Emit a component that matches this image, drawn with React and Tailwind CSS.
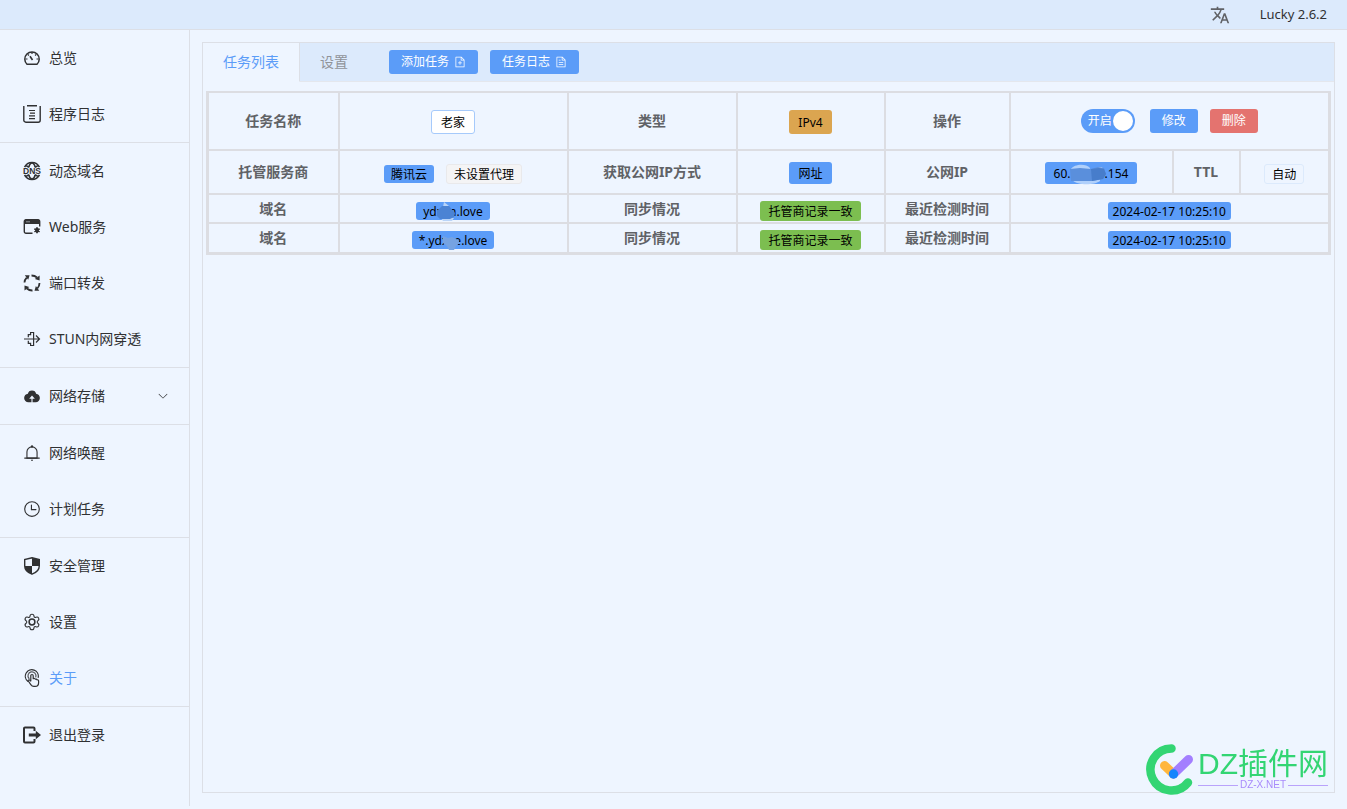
import { useState } from "react";
import { MdTranslate } from "react-icons/md";
import clsx from "clsx";

function IconGauge() {
    return (
        <svg viewBox="0 0 18 18" className="size-[18px]" fill="none" stroke="currentColor" strokeWidth="1.5" strokeLinejoin="round">
            <path d="M4 15.300a7.200 7.200 0 1 1 10 0z" />
            <path d="M9 3v2M4.700 5.300l1.200 1.200M13.300 5.300l-1.200 1.200M2.500 10h2M15.500 10h-2" strokeWidth="1.200" />
            <path d="M7 7.200 9.500 11" strokeWidth="1.600" />
        </svg>
    );
}

function IconLog() {
    return (
        <svg viewBox="0 0 18 18" className="size-[18px]" fill="none" stroke="currentColor" strokeWidth="1.4">
            <path d="M.8 1v14.2a2 2 0 0 0 2 2h12.4a2 2 0 0 0 2-2V1M4 .8h10" />
            <path d="M6 5.5h6M7 8.2h5M6 10.9h6M6 13.6h6" strokeWidth="1.2" />
        </svg>
    );
}

function IconDns() {
    return (
        <svg viewBox="0 0 18 18" className="size-[18px] overflow-visible" fill="none" stroke="currentColor" strokeWidth="1.6">
            <path d="M1.600 5.200a8.200 8.200 0 0 1 14.800 0M1.600 12.800a8.200 8.200 0 0 0 14.800 0" />
            <path d="M5.800 5.200C6.300 3 7.300 1 9 1s2.700 2 3.200 4.200M5.800 12.800C6.300 15 7.300 17 9 17s2.700-2 3.200-4.200" />
            <path d="M3 3.600 6 5.200M15 3.600 12 5.200M3 14.400 6 12.800M15 14.400 12 12.800" />
            <text x="9" y="12" textAnchor="middle" fontSize="8.5" fontWeight="700" fill="currentColor" stroke="none" fontFamily="Liberation Sans">DNS</text>
        </svg>
    );
}

function IconWeb() {
    return (
        <svg viewBox="0 0 18 18" className="size-[18px]" fill="none" stroke="currentColor">
            <path d="M9.500 15.300H3a1.700 1.700 0 0 1-1.700-1.700V3.500A1.700 1.700 0 0 1 3 1.800h12a1.700 1.700 0 0 1 1.700 1.700v5" strokeWidth="1.400" />
            <path d="M1 3.500a2 2 0 0 1 2-2h12a2 2 0 0 1 2 2V6H1z" fill="currentColor" stroke="none" />
            <path d="M3.500 3.800h1M5.500 3.800h1" stroke="#eef5ff" />
            <path d="M14 9.300v6M11.400 10.800l5.200 3M16.600 10.800l-5.200 3" strokeWidth="1.800" />
            <circle cx="14" cy="12.300" r="1.900" fill="currentColor" stroke="none" />
        </svg>
    );
}

function IconForward() {
    return (
        <svg viewBox="0 0 18 18" className="size-[18px]" fill="none" stroke="currentColor" strokeWidth="1.800">
            <path d="M1.500 8.500C1.600 6.500 2.300 5 3.700 3.600M8.500 1.500c2.200 0 4 .6 5.500 2M16.500 9c0 2.200-.8 4-2.200 5.500M9.500 16.500c-2.300.1-4-.6-5.600-2" />
            <path d="M1.800 1.300h4.800L5.200 5.800zM16.600 1.500v5l-4.800-1.400zM16.300 16.700h-4.800l1.400-4.600zM1.500 16.500v-5l4.800 1.400z" fill="currentColor" stroke="none" />
        </svg>
    );
}

function IconStun() {
    return (
        <svg viewBox="0 0 18 18" className="size-[18px]" fill="none" stroke="currentColor" strokeWidth="1.200">
            <path d="M1 9h15.500M13 5.500 16.500 9 13 12.500" />
            <path d="M5.300 7.300V4.700h2.300V2.500h3v13h-3v-2.200H5.300v-2.600" />
        </svg>
    );
}

function IconCloud() {
    return (
        <svg viewBox="0 0 1024 1024" className="size-[18px]" fill="currentColor">
            <path d="M544 864V672h128L512 480 352 672h128v192H320v-1.600c-5.376.320-10.496 1.600-16 1.600A240 240 0 0 1 64 624c0-123.136 93.120-223.488 212.608-237.248A239.808 239.808 0 0 1 512 192a239.872 239.872 0 0 1 235.456 194.752c119.488 13.760 212.480 114.112 212.480 237.248a240 240 0 0 1-240 240c-5.376 0-10.560-1.280-16-1.600v1.600z" />
        </svg>
    );
}

function IconBell() {
    return (
        <svg viewBox="0 0 1024 1024" className="size-[18px]" fill="currentColor">
            <path d="M512 64a64 64 0 0 1 64 64v64H448v-64a64 64 0 0 1 64-64" />
            <path d="M256 768h512V448a256 256 0 1 0-512 0zm256-640a320 320 0 0 1 320 320v384H192V448a320 320 0 0 1 320-320" />
            <path d="M96 768h832q32 0 32 32t-32 32H96q-32 0-32-32t32-32m352 128h128a64 64 0 0 1-128 0" />
        </svg>
    );
}

function IconClock() {
    return (
        <svg viewBox="0 0 1024 1024" className="size-[18px]" fill="currentColor">
            <path d="M512 896a384 384 0 1 0 0-768 384 384 0 0 0 0 768m0 64a448 448 0 1 1 0-896 448 448 0 0 1 0 896" />
            <path d="M480 256a32 32 0 0 1 32 32v256a32 32 0 0 1-64 0V288a32 32 0 0 1 32-32" />
            <path d="M480 512h256q32 0 32 32t-32 32H480q-32 0-32-32t32-32" />
        </svg>
    );
}

function IconShield() {
    return (
        <svg viewBox="0 0 18 18" className="size-[18px]">
            <path d="M9 .8 16.300 2.500v6.300c0 3.900-3 6.900-7.300 8.400-4.300-1.500-7.300-4.500-7.300-8.400V2.500z" fill="none" stroke="currentColor" strokeWidth="1.400" />
            <path d="M9 1l7.300 1.500V9H9zM9 9v8.200C4.700 15.700 1.700 12.700 1.700 9z" fill="currentColor" />
        </svg>
    );
}

function IconSetting() {
    return (
        <svg viewBox="0 0 18 18" className="size-[18px]" fill="none" stroke="currentColor" strokeLinejoin="round">
            <path d="M7 3.300C7 2 7.800 1.300 9 1.300s2 .7 2 2c0 1 1 1.500 1.900 1 1.100-.6 2.100-.3 2.700.7s.4 2-.7 2.700c-.9.500-.9 2.100 0 2.600 1.100.7 1.300 1.700.7 2.700s-1.600 1.300-2.700.7c-.9-.5-1.900 0-1.900 1 0 1.300-.8 2-2 2s-2-.7-2-2c0-1-1-1.500-1.900-1-1.100.6-2.100.3-2.700-.7s-.4-2 .7-2.700c.9-.5.9-2.100 0-2.600C2 7 1.800 6 2.400 5s1.600-1.300 2.700-.7c.9.5 1.900 0 1.900-1z" strokeWidth="1.100" />
            <circle cx="9" cy="9" r="2.900" strokeWidth="1.500" />
        </svg>
    );
}

function IconTouch() {
    return (
        <svg viewBox="0 0 18 18" className="size-[18px]" fill="none" stroke="currentColor" strokeWidth="1.200" strokeLinecap="round" strokeLinejoin="round">
            <path d="M4.800 12.300A6.500 6.500 0 1 1 15.200 8.500" />
            <path d="M6 9.500a4 4 0 1 1 6.800-1.500" strokeOpacity=".8" />
            <path d="M7.800 12V6.700a1.200 1.200 0 0 1 2.400 0v3c.9-.5 1.800-.2 2 .5.900-.4 1.600 0 1.800.6 1-.2 1.600.3 1.600 1.200v1.700c0 2.200-1.300 3.700-3.500 3.700h-1.300c-1.400 0-2.200-.6-3-1.800l-2.500-3.600c-.3-.8.800-1.500 1.500-.8z" fill="#eef5ff" />
        </svg>
    );
}

function IconExit() {
    return (
        <svg viewBox="0 0 18 18" className="size-[18px]">
            <path d="M11.500 5V2.500a1 1 0 0 0-1-1H2a1 1 0 0 0-1 1v13a1 1 0 0 0 1 1h8.500a1 1 0 0 0 1-1V13" fill="none" stroke="currentColor" strokeWidth="2" />
            <path d="M5.800 7.500h7V4.800L18 9l-5.200 4.200v-2.700h-7z" fill="currentColor" />
        </svg>
    );
}

function IconArrowDown() {
    return (
        <svg viewBox="0 0 1024 1024" className="size-3" fill="currentColor">
            <path d="M831.872 340.864 512 652.672 192.128 340.864a30.592 30.592 0 0 0-42.752 0 29.120 29.120 0 0 0 0 41.600L489.664 714.240a32 32 0 0 0 44.672 0l340.288-331.712a29.120 29.120 0 0 0 0-41.728 30.592 30.592 0 0 0-42.752 0z" />
        </svg>
    );
}

function IconDocument({ add }) {
    return (
        <svg viewBox="0 0 1024 1024" className="size-3" fill="currentColor">
            <path d="M832 384H576V128H192v768h640zm-26.496-64L640 154.496V320zM160 64h480l256 256v608a32 32 0 0 1-32 32H160a32 32 0 0 1-32-32V96a32 32 0 0 1 32-32" />
            {add ? (
                <path d="M480 544V416h64v128h128v64H544v128h-64V608H352v-64z" />
            ) : (
                <path d="M320 512h384v64H320zm0-192h160v64H320zm0 384h384v64H320z" />
            )}
        </svg>
    );
}

const menuGroups = [
    [
        { name: "总览", icon: <IconGauge /> },
        { name: "程序日志", icon: <IconLog /> },
    ],
    [
        { name: "动态域名", icon: <IconDns /> },
        { name: "Web服务", icon: <IconWeb /> },
        { name: "端口转发", icon: <IconForward /> },
        { name: "STUN内网穿透", icon: <IconStun /> },
    ],
    [{ name: "网络存储", icon: <IconCloud />, children: true }],
    [
        { name: "网络唤醒", icon: <IconBell /> },
        { name: "计划任务", icon: <IconClock /> },
    ],
    [
        { name: "安全管理", icon: <IconShield /> },
        { name: "设置", icon: <IconSetting /> },
        { name: "关于", icon: <IconTouch />, active: true },
    ],
    [{ name: "退出登录", icon: <IconExit /> }],
];

function Sidebar() {
    return (
        <nav className="w-[190px] shrink-0 border-r border-[#dcdfe6]">
            {menuGroups.map((group, i) => (
                <ul key={i} className={clsx(i > 0 && "border-t border-[#dcdfe6]")}>
                    {group.map((item) => (
                        <li key={item.name}>
                            <a href="#" className="flex h-14 items-center gap-2 pl-[23px] pr-5 text-sm text-[#303133]">
                                {item.icon}
                                <span className={clsx("flex-1", item.active && "text-[#5b9cf8]")}>{item.name}</span>
                                {item.children && <IconArrowDown />}
                            </a>
                        </li>
                    ))}
                </ul>
            ))}
        </nav>
    );
}

function Tag({ className, children }) {
    return (
        <span className={clsx("inline-flex items-center whitespace-nowrap rounded-[3px] pt-0.5 text-xs text-black", className)}>
            {children}
        </span>
    );
}

function Th({ children }) {
    return <th scope="row" className="border-2 border-[#dcdde2] p-0 text-center text-sm font-bold text-[#606266]">{children}</th>;
}

function Td({ className, colSpan, children }) {
    return (
        <td colSpan={colSpan} className={clsx("border-2 border-[#dcdde2] p-0", className)}>
            <div className="flex items-center justify-center">{children}</div>
        </td>
    );
}

// smudge over the private part of a domain
function DomainMask({ light }) {
    return (
        <svg viewBox="0 0 20 20" className="relative -mx-[7px] h-5 w-5">
            {light ? (
                <path d="M2 5l5 2 4-1 6 3 2 3-4 3-2 4H8l-2-4-4-3z" fill="#76a3e2" />
            ) : (
                <>
                    <path d="M7 5 8 0l5 4v3zM4 15l3 4h9l2-3z" fill="#b9d4f8" />
                    <path d="M1 9l5-5h7l6 7-1 4-4 2H4L1 14z" fill="#4b83d4" />
                </>
            )}
        </svg>
    );
}

function IpMask() {
    return (
        <svg viewBox="0 0 38 22" className="relative -mx-0.5 h-[22px] w-[38px]">
            <path d="M2 6C5 1 17 0 21 5v4H2zM3 17c6 6 23 5 28 1V14zM29 4l4 0 2 4h-6z" fill="#b0d0fb" />
            <path d="M1 6l10-1 11 1 7-2 6 1 2 6-3 5-11 2H2z" fill="#5a8fdc" />
            <path d="M22 6l8-1 5 1 2 5-3 5-11 2z" fill="#477dcb" />
        </svg>
    );
}

function TaskTable() {
    const [enabled, setEnabled] = useState(true);

    const domains = [
        { start: "ydx", end: "n.love", light: false, time: "2024-02-17 10:25:10", row: "h-[29px]" },
        { start: "*.ydx", end: "e.love", light: true, time: "2024-02-17 10:25:10", row: "h-[30px]" },
    ];

    return (
        <table className="w-full table-fixed border-collapse border-3 border-t-2 border-[#dcdde2]">
            <colgroup>
                <col className="w-[131px]" />
                <col className="w-[229px]" />
                <col className="w-[169px]" />
                <col className="w-[148px]" />
                <col className="w-[125px]" />
                <col className="w-[163px]" />
                <col className="w-[67px]" />
                <col className="w-[90px]" />
            </colgroup>
            <tbody>
                <tr className="h-[58px]">
                    <Th>任务名称</Th>
                    <Td className="pt-0.5"><Tag className="h-6 border border-[#a6cafb] bg-white px-[9px]">老家</Tag></Td>
                    <Th>类型</Th>
                    <Td className="pt-0.5"><Tag className="h-6 bg-[#dba550] px-[9px]">IPv4</Tag></Td>
                    <Th>操作</Th>
                    <Td colSpan={3}>
                        <label className="relative mr-[15px] flex h-6 w-[54px] cursor-pointer items-center rounded-full bg-[#5b9cf8] pl-[7px] text-xs text-white">
                            <input
                                type="checkbox"
                                role="switch"
                                checked={enabled}
                                onChange={(e) => setEnabled(e.target.checked)}
                                className="peer absolute inset-0 cursor-pointer opacity-0"
                            />
                            开启
                            <span className="absolute left-0.5 top-0.5 size-5 rounded-full bg-white peer-checked:left-8" />
                        </label>
                        <button type="button" className="mr-3 h-6 w-12 rounded-[3px] bg-[#5b9cf8] text-xs text-white">修改</button>
                        <button type="button" className="h-6 w-12 rounded-[3px] bg-[#e4736f] text-xs text-white">删除</button>
                    </Td>
                </tr>
                <tr className="h-11">
                    <Th>托管服务商</Th>
                    <Td className="pt-1">
                        <Tag className="mr-3 h-[18px] bg-[#5b9cf8] px-[7px]">腾讯云</Tag>
                        <Tag className="h-5 border border-[#e9e9eb] bg-[#f4f4f5] px-[7px]">未设置代理</Tag>
                    </Td>
                    <Th>获取公网IP方式</Th>
                    <Td className="pt-0.5"><Tag className="h-[22px] bg-[#5b9cf8] px-[9px]">网址</Tag></Td>
                    <Th>公网IP</Th>
                    <Td className="pt-0.5">
                        <Tag className="h-[22px] bg-[#5b9cf8] px-[9px]">60.<IpMask />.154</Tag>
                    </Td>
                    <Th>TTL</Th>
                    <Td className="pt-1"><Tag className="h-5 border border-[#dceafc] px-[7px]">自动</Tag></Td>
                </tr>
                {domains.map((d) => (
                    <tr key={d.start} className={d.row}>
                        <Th>域名</Th>
                        <Td className="pt-1">
                            <Tag className="h-[18px] bg-[#5b9cf8] px-[7px]">{d.start}<DomainMask light={d.light} />{d.end}</Tag>
                        </Td>
                        <Th>同步情况</Th>
                        <Td className="pt-1"><Tag className="h-5 bg-[#7cbe50] px-2">托管商记录一致</Tag></Td>
                        <Th>最近检测时间</Th>
                        <Td colSpan={3} className="pt-1"><Tag className="h-[18px] bg-[#5b9cf8] px-[5px]">{d.time}</Tag></Td>
                    </tr>
                ))}
            </tbody>
        </table>
    );
}

function Watermark() {
    return (
        <div className="pointer-events-none fixed bottom-[14px] right-[19px] flex items-center gap-1">
            <svg viewBox="0 0 48 52" className="h-[52px] w-12" fill="none" strokeLinecap="round">
                <path d="M25.500 5.500A21 21 0 1 0 42 39.500" stroke="#33d573" strokeWidth="8.500" />
                <path d="M18.500 22.500 27.500 31" stroke="#ffb63d" strokeWidth="9" />
                <path d="M42.500 16.500 27.500 31" stroke="#a37fff" strokeWidth="9" />
                <circle cx="27.500" cy="31" r="4.700" fill="#1684fc" />
            </svg>
            <div>
                <div className="text-[30px] leading-8 text-[#33d573] [font-family:'Liberation_Sans','Noto_Sans_CJK_SC',sans-serif]">DZ插件网</div>
                <div className="flex items-center gap-0.5 text-[10px] leading-[10px] text-[#a98bfb] [font-family:'Liberation_Sans',sans-serif]">
                    <span className="h-px flex-1 bg-[#b9a3fb]" />
                    DZ-X.NET
                    <span className="h-px flex-1 bg-[#b9a3fb]" />
                </div>
            </div>
        </div>
    );
}

function App() {
    const [tab, setTab] = useState("list");

    return (
        <div className="flex h-screen flex-col bg-[#eef5ff] pb-[3px] [font-family:'Noto_Sans','Noto_Sans_CJK_SC',sans-serif]">
            <header className="flex h-[30px] shrink-0 items-center justify-end border-b border-[#dcdfe6] bg-[#dceafc] pr-5">
                <button type="button" aria-label="Language" className="mr-[30px] text-[#606266]">
                    <MdTranslate className="size-5" />
                </button>
                <span className="text-[13px] text-[#303133]">Lucky 2.6.2</span>
            </header>

            <div className="flex min-h-0 flex-1">
                <Sidebar />

                <main className="flex min-w-0 flex-1 px-3 pb-[13px] pt-3">
                    <div className="min-w-0 flex-1 border border-[#dcdfe6]">
                        <div className="flex h-[39px] items-stretch bg-[#dceafc] text-sm">
                            <button
                                type="button"
                                onClick={() => setTab("list")}
                                className={clsx("border-b border-r px-5", tab === "list" ? "border-b-[#eef5ff] border-r-[#dcdfe6] bg-[#eef5ff] text-[#5b9cf8]" : "border-b-[#e4e7ed] border-r-transparent text-[#909399]")}
                            >
                                任务列表
                            </button>
                            <div className="flex flex-1 items-center border-b border-[#e4e7ed]">
                                <button
                                    type="button"
                                    onClick={() => setTab("setting")}
                                    className={clsx("h-full px-5", tab === "setting" ? "bg-[#eef5ff] text-[#5b9cf8]" : "text-[#909399]")}
                                >
                                    设置
                                </button>
                                <button type="button" className="ml-[21px] flex h-6 items-center gap-[5px] rounded-[3px] bg-[#5b9cf8] px-3 text-xs text-white">
                                    添加任务 <IconDocument add />
                                </button>
                                <button type="button" className="ml-3 flex h-6 items-center gap-[5px] rounded-[3px] bg-[#5b9cf8] px-3 text-xs text-white">
                                    任务日志 <IconDocument />
                                </button>
                            </div>
                        </div>
                        <div className="pl-[3px] pr-1 pt-[9px]">
                            <TaskTable />
                        </div>
                    </div>
                </main>
            </div>

            <Watermark />
        </div>
    );
}

export default App;
